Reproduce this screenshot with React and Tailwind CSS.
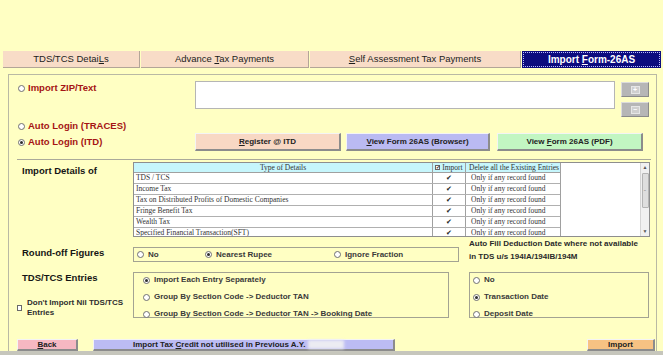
import React from 'react';

const Radio = ({ checked = false }) => (
  <span className="inline-flex items-center justify-center w-[7px] h-[7px] rounded-full border border-[#707070] bg-white shrink-0">
    {checked && <span className="w-[3px] h-[3px] rounded-full bg-[#2e2e2e]" />}
  </span>
);

const RedLabel = ({ checked, children }) => (
  <div className="flex items-center gap-[3px] h-[12px] text-[9.5px] font-bold text-[#a51414] whitespace-nowrap">
    <Radio checked={checked} />
    <span>{children}</span>
  </div>
);

const Opt = ({ checked, children, className = '' }) => (
  <div className={`flex items-center gap-[4px] h-[12px] text-[8px] font-bold text-[#3a3a3a] whitespace-nowrap ${className}`}>
    <Radio checked={checked} />
    <span>{children}</span>
  </div>
);

const Btn = ({ className = '', children }) => (
  <div
    className={`flex items-center justify-center text-[8px] font-bold text-[#222] border-t border-l border-[#f4f4f4] border-b-2 border-r-2 border-b-[#8c8c8c] border-r-[#8c8c8c] whitespace-nowrap ${className}`}
  >
    {children}
  </div>
);

const SmallBtn = ({ children }) => (
  <div className="w-[28px] h-[15px] bg-[#b6b6b6] border-t border-l border-[#dcdcdc] border-b border-r border-b-[#8a8a8a] border-r-[#8a8a8a] flex items-center justify-center">
    <span className="w-[9px] h-[8px] bg-[#cfcfcf] border border-[#e6e6e6] flex items-center justify-center text-[7px] leading-none text-white font-bold">
      {children}
    </span>
  </div>
);

const Tab = ({ className = '', children }) => (
  <div
    className={`flex items-center justify-center bg-[#f8dcc7] border-b border-r border-[#b3a597] text-[9.5px] text-[#1c1c1c] whitespace-nowrap ${className}`}
  >
    <span>{children}</span>
  </div>
);

const rows = [
  'TDS / TCS',
  'Income Tax',
  'Tax on Distributed Profits of Domestic Companies',
  'Fringe Benefit Tax',
  'Wealth Tax',
  'Specified Financial Transaction(SFT)',
];

const DetailsTable = () => (
  <div className="w-[517px] h-[75px] border border-[#8e8e8e] bg-white flex overflow-hidden font-['Liberation_Serif',serif] text-[7.5px] text-[#333]">
    <div className="w-[427px] flex flex-col border-r border-[#a0a0a0]">
      <div className="flex h-[10px] shrink-0 bg-[#c6f6fc] border-b border-[#a0a0a0]">
        <div className="w-[299px] border-r border-[#a0a0a0] flex items-center justify-center">Type of Details</div>
        <div className="w-[33px] border-r border-[#a0a0a0] flex items-center justify-center gap-[2px]">
          <span className="w-[5px] h-[5px] border border-[#666] bg-white text-[5px] leading-none flex items-center justify-center">✔</span>
          <span>Import</span>
        </div>
        <div className="flex-1 flex items-center pl-[3px] whitespace-nowrap">Delete all the Existing Entries</div>
      </div>
      {rows.map((r) => (
        <div key={r} className="flex h-[11px] shrink-0 border-b border-[#b0b0b0]">
          <div className="w-[299px] border-r border-[#a0a0a0] flex items-center pl-[2px] whitespace-nowrap">{r}</div>
          <div className="w-[33px] border-r border-[#a0a0a0] flex items-center justify-center text-[7px] text-[#222]">✔</div>
          <div className="flex-1 flex items-center pl-[5px] whitespace-nowrap">Only if any record found</div>
        </div>
      ))}
    </div>
    <div className="w-[79px] bg-white" />
    <div className="w-[9px] bg-[#f0f0f0] border-l border-[#d4d4d4] flex flex-col items-center">
      <div className="h-[9px] w-full flex items-center justify-center text-[5px] text-[#555]">▲</div>
      <div className="w-[7px] h-[35px] mt-[1px] bg-[#dedede] border border-[#b4b4b4] rounded-[1px] flex items-center justify-center text-[4px] text-[#888]">≡</div>
      <div className="flex-1" />
      <div className="h-[9px] w-full flex items-center justify-center text-[5px] text-[#555]">▼</div>
    </div>
  </div>
);

export default function App() {
  return (
    <div className="w-[663px] h-[355px] bg-[#ffffc3] overflow-hidden flex flex-col font-['Liberation_Sans',Arial,sans-serif]">
      <div className="h-[51px] shrink-0" />

      {/* Tabs */}
      <div className="flex h-[17px] shrink-0 pl-[3px] gap-[1px]">
        <Tab className="w-[137px]">TDS/TCS Detai<u>L</u>s</Tab>
        <Tab className="w-[168px]">Advance <u>T</u>ax Payments</Tab>
        <Tab className="w-[211px]"><u>S</u>elf Assessment Tax Payments</Tab>
        <div className="w-[139px] bg-[#0c0c7e] p-[1px]">
          <div className="h-full border border-dotted border-[#b8b8ff] flex items-center justify-center text-[10px] font-bold text-white whitespace-nowrap">
            <span>Import <u>F</u>orm-26AS</span>
          </div>
        </div>
      </div>

      {/* Panel */}
      <div className="mt-[6px] ml-[8px] w-[649px] h-[277px] shrink-0 border-t border-l border-r border-[#b9b9a4] flex flex-col">
        {/* ZIP row */}
        <div className="flex pt-[6px]">
          <div className="w-[186px] pl-[9px] pt-[1px]">
            <RedLabel>Import ZIP/Text</RedLabel>
          </div>
          <div className="w-[420px] h-[28px] bg-white border border-[#b5b5b5]" />
          <div className="ml-[6px] pt-[1px] flex flex-col gap-[5px]">
            <SmallBtn>+</SmallBtn>
            <SmallBtn>−</SmallBtn>
          </div>
        </div>

        {/* Auto login rows */}
        <div className="flex">
          <div className="w-[186px] pl-[9px] pt-[3px] flex flex-col gap-[4px]">
            <RedLabel>Auto Login (TRACES)</RedLabel>
            <RedLabel checked>Auto Login (ITD)</RedLabel>
          </div>
          <div className="pt-[16px] flex">
            <Btn className="w-[146px] h-[18px] bg-[#f8d8c4]"><span><u>R</u>egister @ ITD</span></Btn>
            <Btn className="ml-[5px] w-[144px] h-[18px] bg-[#babaf2]"><span><u>V</u>iew Form 26AS (Browser)</span></Btn>
            <Btn className="ml-[7px] w-[146px] h-[18px] bg-[#c2f6c2]"><span>View <u>F</u>orm 26AS (PDF)</span></Btn>
          </div>
        </div>

        <div className="mt-[8px] ml-[8px] w-[634px] h-[1px] bg-[#aaa99a]" />

        {/* Import details */}
        <div className="flex mt-[2px]">
          <div className="w-[124px] pl-[13px] pt-[3px]">
            <div className="h-[12px] flex items-center text-[9.5px] font-bold text-[#151515] whitespace-nowrap">Import Details of</div>
          </div>
          <DetailsTable />
        </div>

        {/* Round-off */}
        <div className="flex">
          <div className="w-[124px] pl-[13px] pt-[9px]">
            <div className="h-[14px] flex items-center text-[9.5px] font-bold text-[#151515] whitespace-nowrap">Round-off Figures</div>
          </div>
          <div className="mt-[10px] w-[326px] h-[15px] border border-[#a3a392] flex items-center pl-[3px]">
            <Opt className="w-[68px]">No</Opt>
            <Opt checked className="w-[129px]">Nearest Rupee</Opt>
            <Opt>Ignore Fraction</Opt>
          </div>
          <div className="ml-[10px] w-[180px] text-[8px] font-bold leading-[13px] text-[#2a2a2a] whitespace-nowrap">
            <div>Auto Fill Deduction Date where not available</div>
            <div>in TDS u/s 194IA/194IB/194M</div>
          </div>
        </div>

        {/* TDS/TCS entries */}
        <div className="flex mt-[9px]">
          <div className="w-[124px] pl-[13px]">
            <div className="h-[12px] flex items-center text-[9.5px] font-bold text-[#151515] whitespace-nowrap">TDS/TCS Entries</div>
            <div className="mt-[14px] -ml-[5px] flex items-center gap-[5px]">
              <span className="w-[5px] h-[6px] border border-[#6a6a6a] bg-white shrink-0" />
              <div className="text-[8px] font-bold leading-[10px] text-[#2e2e2e] whitespace-nowrap">
                <div>Don't Import Nil TDS/TCS</div>
                <div>Entries</div>
              </div>
            </div>
          </div>
          <div className="w-[316px] h-[46px] border border-[#a3a392] pl-[9px] pt-[1px] flex flex-col gap-[5px]">
            <Opt checked>Import Each Entry Separately</Opt>
            <Opt>{'Group By Section Code -> Deductor TAN'}</Opt>
            <Opt>{'Group By Section Code -> Deductor TAN -> Booking Date'}</Opt>
          </div>
          <div className="ml-[20px] w-[180px] h-[46px] border border-[#a3a392] pl-[3px] pt-[1px] flex flex-col gap-[5px]">
            <Opt>No</Opt>
            <Opt checked>Transaction Date</Opt>
            <Opt>Deposit Date</Opt>
          </div>
        </div>

        {/* Bottom buttons */}
        <div className="flex mt-[21px] h-[12px]">
          <Btn className="ml-[8px] w-[61px] h-[12px] bg-[#f6b8c2]"><span><u>B</u>ack</span></Btn>
          <Btn className="ml-[15px] w-[302px] h-[12px] bg-[#bcbcf4] !justify-start pl-[39px]">
            <span>Import Tax <u>C</u>redit not utilised in Previous A.Y.</span>
            <span className="ml-[3px] w-[36px] h-[9px] bg-[#ececf2] blur-[1.5px]" />
          </Btn>
          <Btn className="ml-auto mr-[1px] w-[68px] h-[12px] bg-[#f7c283]">Import</Btn>
        </div>
      </div>

      <div className="h-[4px] shrink-0 bg-[#c6c6bc]" />
    </div>
  );
}
